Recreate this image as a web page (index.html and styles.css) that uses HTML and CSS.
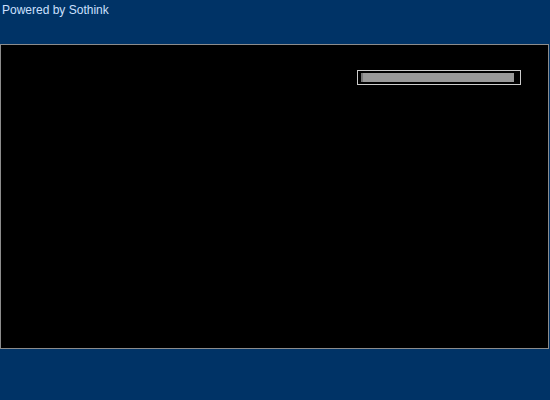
FILE: index.html
```html
<!DOCTYPE html>
<html>
<head>
<meta charset="utf-8">
<link rel="stylesheet" href="styles.css">
</head>
<body>
<div class="header">Powered by Sothink</div>
<div class="stage">
  <div class="loader">
    <div class="track"><div class="fill" style="width:100%"></div></div>
  </div>
</div>
</body>
</html>
```
FILE: styles.css
```css
html, body {
  margin: 0;
  padding: 0;
  background: #003366;
  width: 550px;
  height: 400px;
  overflow: hidden;
}
.header {
  height: 44px;
  box-sizing: border-box;
  padding: 3px 0 0 2px;
  font-family: "Liberation Sans", Arial, sans-serif;
  font-size: 12px;
  line-height: 14px;
  color: #cce0ff;
}
.stage {
  width: 549px;
  height: 305px;
  box-sizing: border-box;
  border: 1px solid #8c8c8c;
  background: #000;
  display: flex;
  justify-content: flex-end;
  align-items: flex-start;
  padding: 25px 27px 0 0;
}
.loader {
  width: 164px;
  height: 15px;
  box-sizing: border-box;
  border: 1px solid #cccccc;
  padding: 2px 6px 2px 3px;
}
.track {
  height: 100%;
  background: #999999;
  border-left: 2px solid #777777;
}
.fill {
  height: 100%;
}
```
